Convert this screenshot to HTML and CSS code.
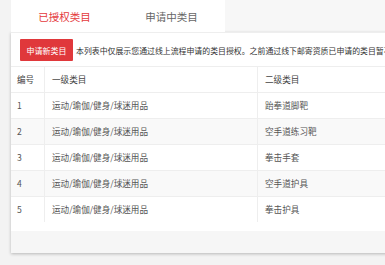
FILE: index.html
```html
<html>

<head>
    <meta charset="utf-8">
    <title>类目管理</title>
    <link rel="stylesheet" href="styles.css">
</head>

<body>
    <main>
        <nav class="tabs">
            <a class="tab active">已授权类目</a>
            <a class="tab">申请中类目</a>
        </nav>
        <section class="panel">
            <div class="toolbar">
                <button class="btn-apply">申请新类目</button>
                <p class="tip">本列表中仅展示您通过线上流程申请的类目授权。之前通过线下邮寄资质已申请的类目暂不在此展示</p>
            </div>
            <table class="cat-table">
                <thead>
                    <tr>
                        <th class="col-no">编号</th>
                        <th class="col-first">一级类目</th>
                        <th>二级类目</th>
                    </tr>
                </thead>
                <tbody>
                    <tr>
                        <td class="col-no">1</td>
                        <td>运动/瑜伽/健身/球迷用品</td>
                        <td>跆拳道脚靶</td>
                    </tr>
                    <tr>
                        <td class="col-no">2</td>
                        <td>运动/瑜伽/健身/球迷用品</td>
                        <td>空手道练习靶</td>
                    </tr>
                    <tr>
                        <td class="col-no">3</td>
                        <td>运动/瑜伽/健身/球迷用品</td>
                        <td>拳击手套</td>
                    </tr>
                    <tr>
                        <td class="col-no">4</td>
                        <td>运动/瑜伽/健身/球迷用品</td>
                        <td>空手道护具</td>
                    </tr>
                    <tr>
                        <td class="col-no">5</td>
                        <td>运动/瑜伽/健身/球迷用品</td>
                        <td>拳击护具</td>
                    </tr>
                </tbody>
            </table>
            <div class="panel-foot"></div>
        </section>
    </main>
</body>

</html>
```

FILE: styles.css
```css
html {
    width: 100vw;
    max-width: 100%;
}

body {
    margin: 0px;
    padding: 0px;
    overflow: hidden;
    background: #f3f3f3;
    font-family: "Noto Sans CJK SC", "Liberation Sans", sans-serif;
    color: #555;
}

main {
    padding-left: 11px;
    width: 560px;
}

.tabs {
    display: flex;
    height: 32px;
    background: #f7f7f7;
}

.tab {
    display: flex;
    align-items: center;
    justify-content: center;
    width: 107px;
    background: #fff;
    font-size: 10.5px;
    color: #666;
}

.tab.active {
    color: #e4393c;
}

.panel {
    background: #fff;
    border-top: 1px solid #eee;
    box-shadow: 0px 1px 3px rgba(0, 0, 0, 0.25);
}

.toolbar {
    display: flex;
    align-items: center;
    gap: 3px;
    padding: 6px 0px 5px 9px;
    border-bottom: 1px solid #eee;
}

.btn-apply {
    flex: none;
    width: 53px;
    height: 22px;
    padding: 0px;
    border: none;
    border-radius: 1px;
    background: #e0383b;
    color: #fff;
    font-family: inherit;
    font-size: 8px;
}

.tip {
    margin: 0px;
    white-space: nowrap;
    font-size: 7.9px;
    color: #333;
}

.cat-table {
    width: 100%;
    border-collapse: collapse;
    font-size: 8.6px;
}

.cat-table th,
.cat-table td {
    height: 26px;
    padding: 0px 7px;
    text-align: left;
    font-weight: normal;
    border-bottom: 1px solid #eee;
    border-left: 1px solid #eee;
}

.cat-table th {
    height: 25px;
    color: #444;
}

.cat-table .col-no {
    width: 20px;
    padding-left: 6px;
    border-left: none;
}

.cat-table .col-first {
    width: 198px;
}

.cat-table tbody tr:nth-child(even) {
    background: #f9f9f9;
}

.cat-table tbody tr:last-child td {
    border-bottom: none;
}

.panel-foot {
    height: 22px;
    margin-top: 9px;
    background: #f6f6f6;
}
```
